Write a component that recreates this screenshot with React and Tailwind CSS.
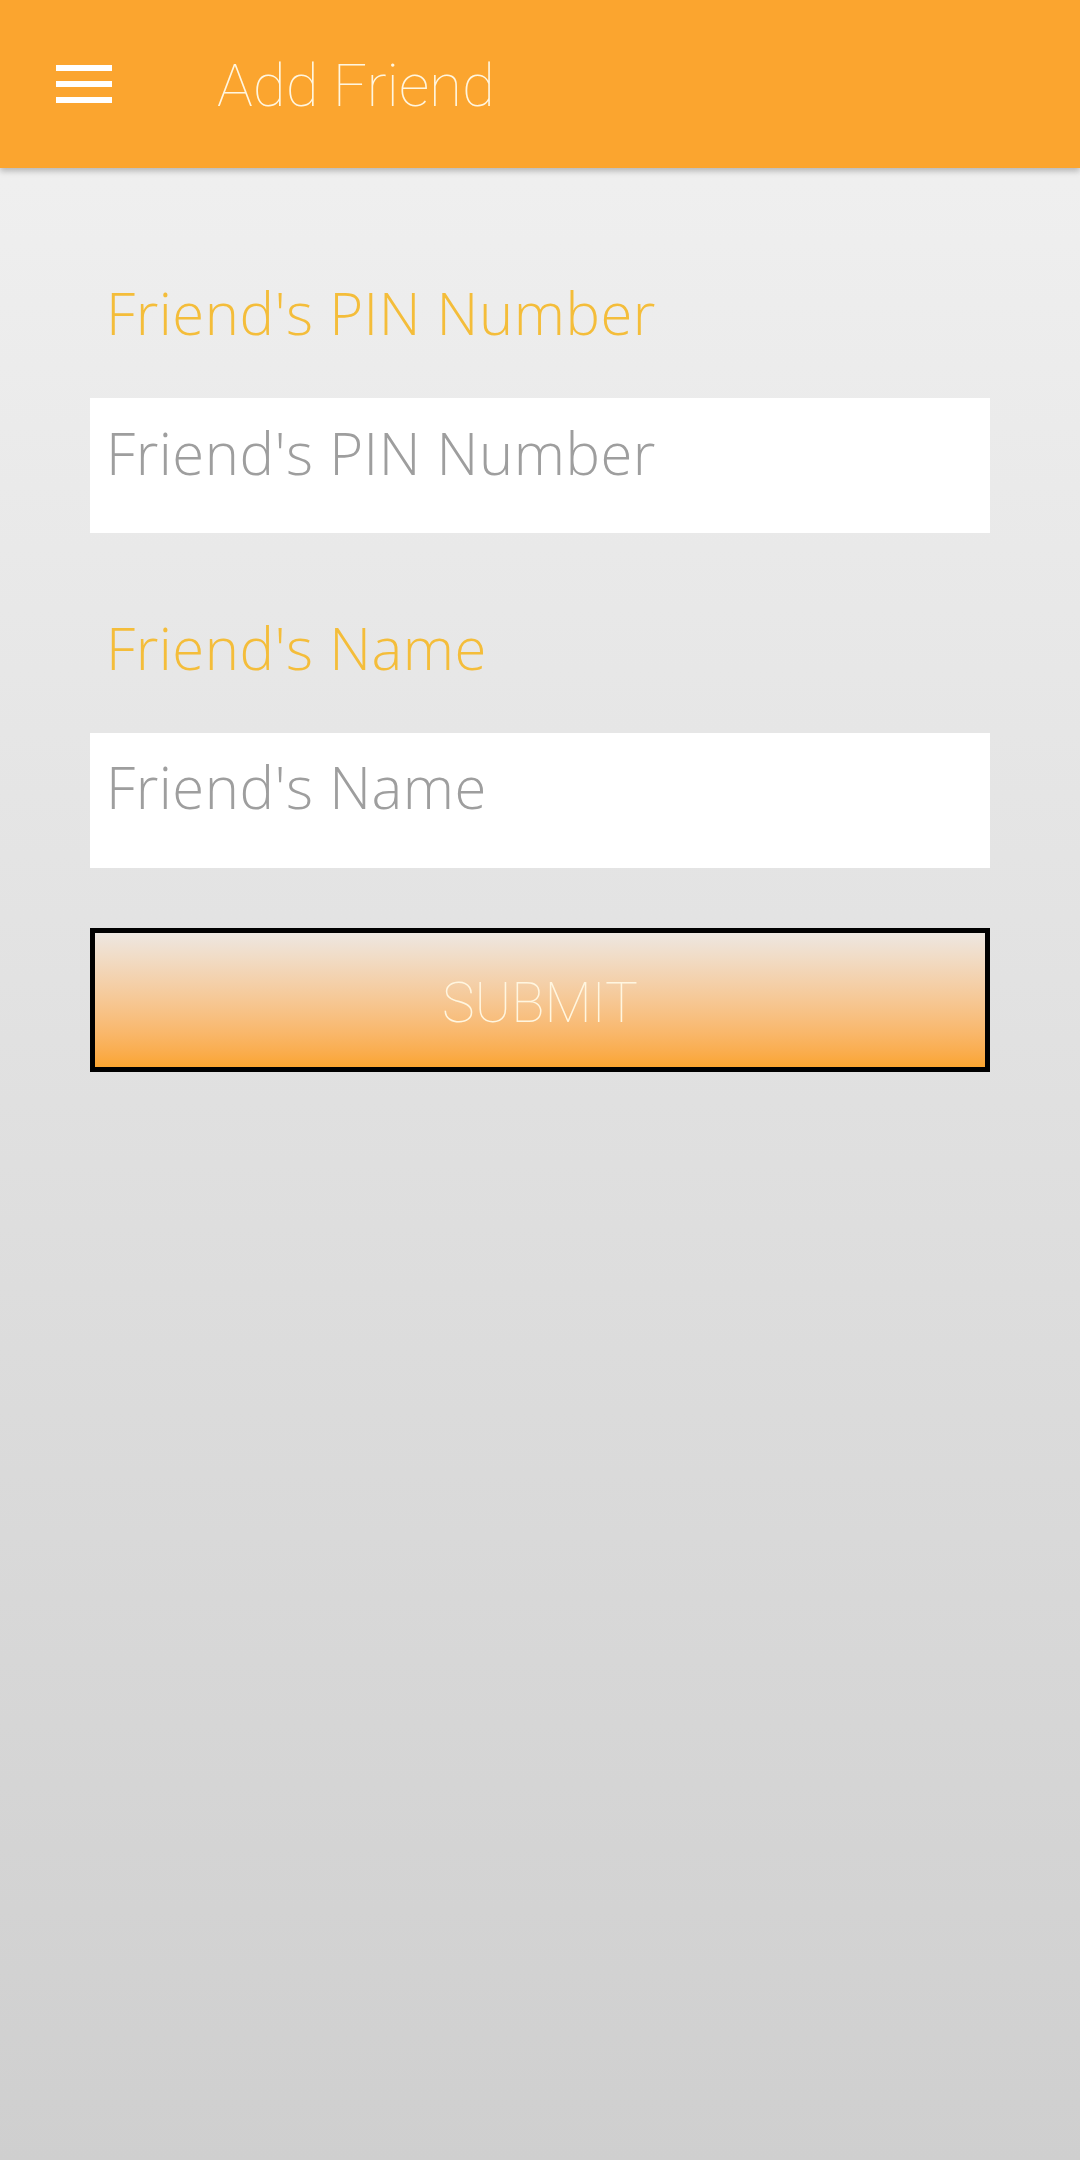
export default function App() {
  const label = "text-[58px] leading-[58px] text-[#f4bd3a] font-light tracking-[0.5px]";
  const ph = "text-[58px] leading-[58px] text-[#9e9e9e] font-light tracking-[0.5px]";
  const fam = { fontFamily: '"Open Sans", "DejaVu Sans", sans-serif' };
  return (
    <div className="min-h-[2160px] w-[1080px] bg-gradient-to-b from-[#f2f2f2] to-[#cfcfcf]">
      <header className="relative z-10 flex h-[168px] items-center bg-[#fba52f] shadow-[0_3px_6px_rgba(0,0,0,0.25)]">
        <div className="ml-[56px] flex w-[56px] flex-col gap-[10px]">
          <span className="block h-[6px] bg-white" />
          <span className="block h-[6px] bg-white" />
          <span className="block h-[6px] bg-white" />
        </div>
        <h1
          className="ml-[105px] mt-[4px] text-[60px] font-thin leading-none text-[#fff6e0]"
          style={{ fontFamily: 'Roboto, "Liberation Sans", sans-serif' }}
        >
          Add Friend
        </h1>
      </header>
      <main className="flex flex-col px-[90px]" style={fam}>
        <div className={`${label} mt-[116px] pl-[16px]`}>Friend's PIN Number</div>
        <div className="mt-[56px] h-[135px] bg-white pl-[16px] pt-[26px]">
          <div className={ph}>Friend's PIN Number</div>
        </div>
        <div className={`${label} mt-[86px] pl-[16px]`}>Friend's Name</div>
        <div className="mt-[56px] h-[135px] bg-white pl-[16px] pt-[25px]">
          <div className={ph}>Friend's Name</div>
        </div>
        <button
          className="mt-[60px] flex h-[144px] items-center justify-center border-[5px] border-black bg-gradient-to-b from-[#ede7e1] to-[#fba52f] pt-[6px] text-[55px] font-thin text-[#fff6e0]"
          style={{ fontFamily: 'Roboto, "Liberation Sans", sans-serif' }}
        >
          SUBMIT
        </button>
      </main>
    </div>
  );
}
